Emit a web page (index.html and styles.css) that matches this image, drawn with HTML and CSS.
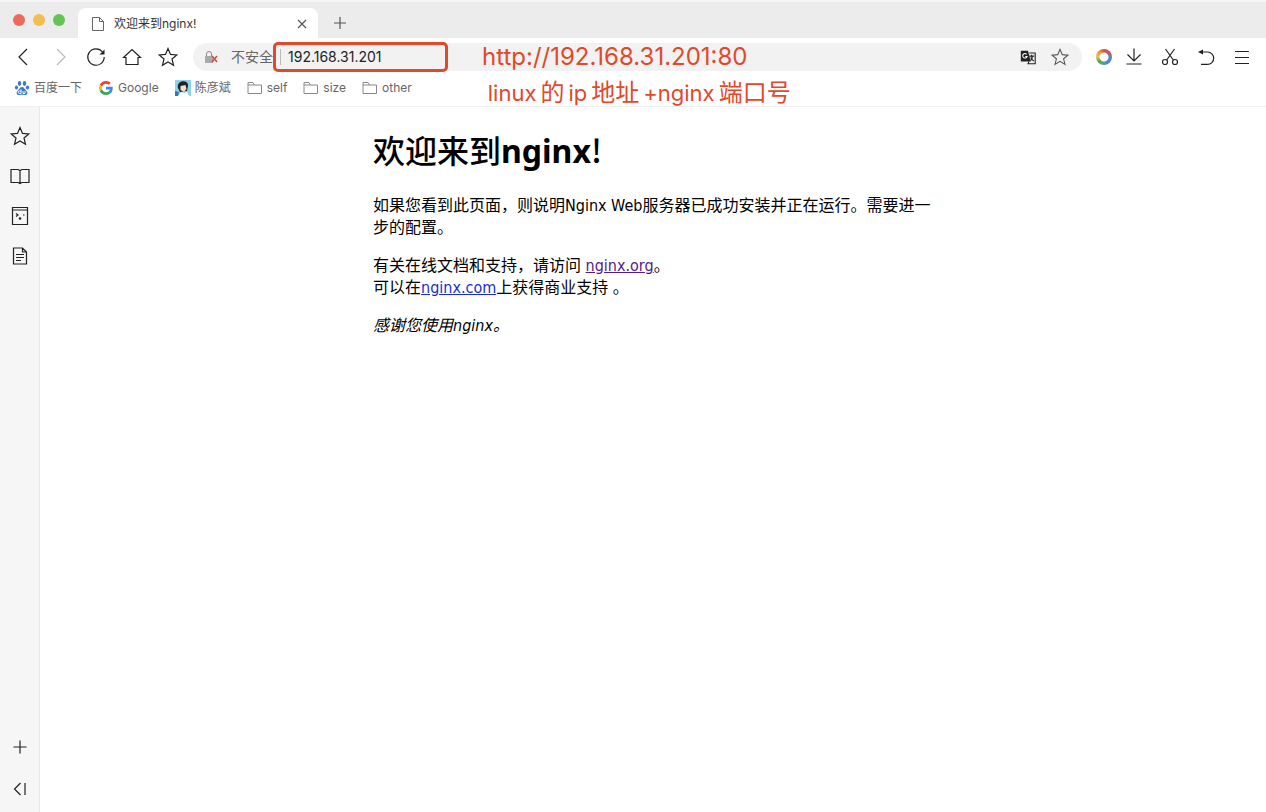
FILE: index.html
```html
<!DOCTYPE html>
<html lang="zh-CN">
<head>
<meta charset="utf-8">
<meta name="viewport" content="width=device-width, initial-scale=1">
<title>欢迎来到nginx!</title>
<link rel="stylesheet" href="styles.css">
</head>
<body>
<svg class="defs" aria-hidden="true">
  <symbol id="star" viewBox="0 0 20 20"><path d="M10 1.500l2.500 5.900 6.300.5-4.800 4.100 1.500 6.300-5.500-3.400-5.500 3.400 1.500-6.300-4.800-4.100 6.300-.5z"/></symbol>
  <symbol id="folder" viewBox="0 0 16 14"><path d="M1 12.500v-11h5l1.500 2.500h7v8.500z"/><path d="M1 4h6.500"/></symbol>
</svg>
<div class="window">
  <header class="chrome">
    <div class="tabs">
      <div class="lights">
        <button class="light red" aria-label="关闭窗口"></button>
        <button class="light yellow" aria-label="最小化"></button>
        <button class="light green" aria-label="全屏"></button>
      </div>
      <div class="tab">
        <svg class="page-icon" viewBox="0 0 14 16"><path d="M1.500 1.500h7l4 4v9h-11z M8.500 1.500v4h4"/></svg>
        <span class="tab-title">欢迎来到nginx!</span>
        <button class="icon small" aria-label="关闭标签页"><svg viewBox="0 0 16 16"><path d="M4 4l8 8M12 4l-8 8"/></svg></button>
      </div>
      <button class="icon new-tab" aria-label="新建标签页"><svg viewBox="0 0 20 20"><path d="M4 10h12M10 4v12"/></svg></button>
    </div>

    <div class="toolbar">
      <nav class="history">
        <button class="icon" aria-label="后退"><svg viewBox="0 0 20 20"><path d="M13 2l-8 8 8 8"/></svg></button>
        <button class="icon pale" aria-label="前进"><svg viewBox="0 0 20 20"><path d="M7 2l8 8-8 8"/></svg></button>
        <button class="icon" aria-label="刷新"><svg viewBox="0 0 20 20"><path d="M16.500 5A8.200 8.200 0 1 0 18.200 10"/><path class="solid" d="M18.500 2.500v5h-5z"/></svg></button>
        <button class="icon" aria-label="主页"><svg viewBox="0 0 20 20"><path d="M4 10.500H1.500L10 2.500l8.500 8H16v7H4z"/></svg></button>
        <button class="icon" aria-label="收藏"><svg><use href="#star"/></svg></button>
      </nav>
      <div class="omnibox">
        <svg class="lock" viewBox="0 0 16 14"><path class="lock-body" d="M1 6h8v7H1z"/><path class="lock-arc" d="M2.500 6V4a2.500 2.500 0 0 1 5 0v2"/><path class="lock-cross" d="M8 6l5 6M13 6l-5 6"/></svg>
        <label class="insecure" for="address">不安全</label>
        <div class="address-box"><input id="address" type="text" value="192.168.31.201"></div>
        <p class="note url">http://192.168.31.201:80</p>
        <div class="omni-actions">
          <button class="icon" aria-label="翻译"><svg viewBox="0 0 20 20"><path class="solid" d="M2 3h8l3 12H2z"/><path class="white" d="M8.500 7a2.500 2.500 0 1 0 .5 2.500H7"/><path d="M11.500 5.500H18v12h-8l1-2.500"/><path d="M11.500 9H17M14 7.500V9c1.500 2 .5 4-2 5M13 10.500c1 2 2 3 3.500 4"/></svg></button>
          <button class="icon star" aria-label="添加收藏"><svg><use href="#star"/></svg></button>
        </div>
      </div>
      <button class="ring" aria-label="扩展"></button>
      <div class="tools">
        <button class="icon" aria-label="下载"><svg viewBox="0 0 20 20"><path d="M10 1.500V14M3.500 7.500L10 14l6.500-6.500M2.500 17h15"/></svg></button>
        <button class="icon" aria-label="截图"><svg viewBox="0 0 20 20"><path d="M5.500 2l7.800 11M14.500 2L6.700 13"/><circle cx="5" cy="15" r="2.500"/><circle cx="15" cy="15" r="2.500"/></svg></button>
        <button class="icon" aria-label="撤销"><svg viewBox="0 0 20 20"><path d="M5 5h6.500a6.200 6.200 0 0 1 0 12.400H5"/><path class="solid" d="M2 5l5-2.500v5z"/></svg></button>
        <button class="icon" aria-label="菜单"><svg viewBox="0 0 20 20"><path d="M3 4.500h14M3 10.500h14M3 16.500h14"/></svg></button>
      </div>
    </div>

    <nav class="bookmarks">
      <a href="#"><svg class="paw" viewBox="0 0 16 16"><ellipse cx="5.500" cy="3.500" rx="1.700" ry="2.400"/><ellipse cx="10.500" cy="3.500" rx="1.700" ry="2.400"/><ellipse cx="2.500" cy="7.500" rx="1.600" ry="2.100"/><ellipse cx="13.500" cy="7.500" rx="1.600" ry="2.100"/><path d="M8 7c2 0 2.500 2 4 3.500 3 3 .5 5-1.500 4.500-2-.4-3-.4-5 0-2 .5-4.500-1.500-1.500-4.500C5.500 9 6 7 8 7z"/><path class="paw-mark" d="M7 9.500v4H5.500a1.200 1.200 0 0 1 0-2.500H7M9 11v2.500h2V11"/></svg>百度一下</a>
      <a href="#"><svg viewBox="0 0 48 48"><path fill="#ea4335" d="M24 9.500c3.500 0 6.700 1.200 9.200 3.600l6.900-6.900C35.900 2.400 30.500 0 24 0 14.600 0 6.500 5.400 2.600 13.200l8 6.200C12.400 13.700 17.700 9.500 24 9.500z"/><path fill="#4285f4" d="M47 24.500c0-1.600-.2-3.100-.4-4.500H24v9h12.900c-.6 3-2.200 5.500-4.700 7.200l7.700 6C44.400 38 47 31.800 47 24.500z"/><path fill="#fbbc05" d="M10.500 28.600a14.500 14.500 0 0 1 0-9.200l-8-6.200a24 24 0 0 0 0 21.600z"/><path fill="#34a853" d="M24 48c6.500 0 12-2.100 15.900-5.800l-7.700-6c-2.200 1.500-5 2.300-8.200 2.300-6.300 0-11.600-4.200-13.500-9.900l-8 6.200C6.500 42.600 14.600 48 24 48z"/></svg>Google</a>
      <a href="#"><svg class="avatar" viewBox="0 0 16 16"><path fill="#8bd2ef" d="M0 0h16v16H0z"/><path fill="#222" d="M3 8C1 0 14-1 13 6l-1 5-7 1z"/><path fill="#f7ddd1" d="M5.500 6l5-1 1 4-2.500 3-3.500-2z"/><path fill="#fff" d="M3 16l3-4 3 1 3-1 2 4z"/><path fill="#3b70b8" d="M0 11l4 1-1 4H0z"/></svg>陈彦斌</a>
      <a href="#"><svg><use href="#folder"/></svg>self</a>
      <a href="#"><svg><use href="#folder"/></svg>size</a>
      <a href="#"><svg><use href="#folder"/></svg>other</a>
      <p class="note hint"><span>linux</span><span class="han">的</span><span>ip</span><span class="han">地址</span><span>+nginx</span><span class="han">端口号</span></p>
    </nav>
  </header>

  <div class="body">
    <aside class="sidebar">
      <button class="icon" aria-label="收藏夹"><svg><use href="#star"/></svg></button>
      <button class="icon" aria-label="阅读"><svg viewBox="0 0 20 20"><path d="M1 3.500h7l2 1 2-1h7v13h-7l-2 1-2-1H1zM10 4.500v13"/></svg></button>
      <button class="icon" aria-label="小程序"><svg viewBox="0 0 20 20"><path d="M2.500 1.500h15v17h-15zM2.500 4h15M6 7.500l2 1.500-2 1.500M13 9h1.500"/><circle class="solid" cx="10" cy="12.500" r="1.300"/></svg></button>
      <button class="icon" aria-label="笔记"><svg viewBox="0 0 20 20"><path d="M3.500 2h9l4 4v12h-13zM12.500 2v4h4M6 8.500h8M6 11.500h8M6 14.500h5"/></svg></button>
      <button class="icon add" aria-label="添加"><svg viewBox="0 0 20 20"><path d="M3.500 10h13M10 3.500v13"/></svg></button>
      <button class="icon" aria-label="收起侧栏"><svg viewBox="0 0 20 20"><path d="M10.500 4l-6 6 6 6M15 4v12"/></svg></button>
    </aside>
    <main class="content">
      <article class="welcome">
        <h1>欢迎来到<b>nginx</b>!</h1>
        <p>如果您看到此页面，则说明Nginx Web服务器已成功安装并正在运行。需要进一步的配置。</p>
        <p>有关在线文档和支持，请访问 <a class="visited" href="#">nginx.org</a>。<br>可以在<a href="#">nginx.com</a>上获得商业支持 。</p>
        <p><em>感谢您使用nginx。</em></p>
      </article>
    </main>
  </div>
</div>
</body>
</html>
```
FILE: styles.css
```css
* { box-sizing: border-box; }
body {
  margin: 0;
  background: #fff;
  color: #000;
  font-family: Inter, "Noto Sans CJK SC", sans-serif;
}
button { padding: 0; border: 0; background: none; }
svg { display: block; fill: none; stroke: currentColor; }
.defs { position: absolute; width: 0; height: 0; }
.window { display: flex; flex-direction: column; min-height: 100vh; }

.icon {
  display: flex;
  align-items: center;
  justify-content: center;
  flex: none;
  width: 20px;
  height: 20px;
  color: #222;
}
.icon svg { width: 20px; height: 20px; stroke-width: 1.2; }
.icon.small svg { width: 16px; height: 16px; }
.icon.pale { color: #bbb; }
.solid { fill: currentColor; stroke: none; }
.white { stroke: #fff; }

.chrome { border-bottom: 1px solid #f0f0f0; }
.tabs {
  display: flex;
  align-items: flex-end;
  height: 38px;
  background: #ececec;
  border-top: 2px solid #f6f6f6;
}
.lights { display: flex; gap: 8px; width: 78px; padding: 0 0 12px 13px; }
.light { width: 12px; height: 12px; border-radius: 50%; }
.red { background: #ed6a5f; }
.yellow { background: #f5bd4f; }
.green { background: #61c455; }
.tab {
  display: flex;
  align-items: center;
  gap: 9px;
  width: 240px;
  height: 30px;
  padding: 2px 6px 0 13px;
  background: #fff;
  border-radius: 8px 8px 0 0;
  font-size: 12px;
  line-height: 16px;
  color: #333;
}
.page-icon { width: 14px; height: 16px; color: #666; }
.tab-title { flex: 1; }
.tab .icon, .new-tab { color: #555; }
.new-tab { margin: 0 0 5px 12px; }

.toolbar { display: flex; align-items: center; height: 38px; padding: 0 14px; }
.history { display: flex; gap: 16px; margin-right: 15px; }
.omnibox {
  display: flex;
  align-items: center;
  flex: 1;
  height: 28px;
  padding: 0 12px 0 11px;
  background: #f2f2f2;
  border-radius: 14px;
}
.lock { width: 16px; height: 14px; }
.lock-body { fill: #aaa; stroke: none; }
.lock-arc { stroke: #888; }
.lock-cross { stroke: #cf4a40; stroke-width: 1.5; }
.insecure { margin-left: 11px; font-size: 14px; line-height: 20px; color: #666; }
.address-box {
  width: 175px;
  padding: 4px;
  border: 3px solid #e0492a;
  border-radius: 5px;
}
.address-box input {
  display: block;
  width: 100%;
  height: 16px;
  padding: 0 0 0 7px;
  border: 0;
  border-left: 1px solid #bbb;
  outline: 0;
  background: none;
  color: #222;
  font: 14px/16px Inter, sans-serif;
}
.note { margin: 0; color: #e0492a; font-size: 22px; line-height: 28px; white-space: nowrap; }
.note.url { margin-left: 34px; font-size: 24px; }
.hint { display: flex; align-items: baseline; align-self: flex-start; gap: 4px; margin: 3px 0 0 60px; }
.han { font-size: 24px; }
.omni-actions { display: flex; gap: 12px; margin-left: auto; }
.omni-actions .icon svg { width: 18px; height: 18px; }
.omni-actions .star { color: #555; }
.tools { display: flex; gap: 16px; }
.ring {
  width: 16px;
  height: 16px;
  margin: 0 12px 0 14px;
  border-radius: 50%;
  background: radial-gradient(circle, #fff 4px, transparent 5px), conic-gradient(#d95040, #ba5b62 60deg, #4e86d9 90deg, #4e86d9 150deg, #54a766 190deg, #54a766 230deg, #f0c04a 270deg, #e69a3a 320deg, #d95040);
}

.bookmarks {
  display: flex;
  align-items: center;
  gap: 16px;
  height: 30px;
  padding: 0 14px 6px;
  font-size: 12px;
  line-height: 16px;
}
.bookmarks a { display: flex; align-items: center; gap: 4px; color: #666; text-decoration: none; }
.bookmarks svg { width: 16px; height: 14px; stroke: #888; }
.bookmarks a:nth-child(2) svg { stroke: none; }
.bookmarks .paw { height: 16px; fill: #3878cf; stroke: none; }
.bookmarks .paw-mark { fill: none; stroke: #fff; }
.bookmarks .avatar { height: 16px; stroke: none; }

.body { display: flex; flex: 1; }
.sidebar {
  display: flex;
  flex-direction: column;
  align-items: center;
  gap: 20px;
  width: 40px;
  padding: 19px 0 13px;
  background: #f6f6f6;
  border-right: 1px solid #e8e8e8;
}
.add { margin: auto 0 2px; }
.content { flex: 1; font-family: "DejaVu Sans Condensed", "Noto Sans CJK SC", sans-serif; }
.welcome { max-width: 560px; margin: 0 auto; font-size: 16px; line-height: 22px; }
.welcome h1 {
  margin: 20px 0 22px;
  font-family: "Noto Sans CJK SC", sans-serif;
  font-size: 32px;
  line-height: 45px;
  font-weight: 500;
}
.welcome h1 b { font-family: "Noto Sans", sans-serif; font-weight: 700; }
.welcome p { margin: 16px 0; }
.welcome a { color: #1a2fd0; }
.welcome a.visited { color: #551a8b; }
```
